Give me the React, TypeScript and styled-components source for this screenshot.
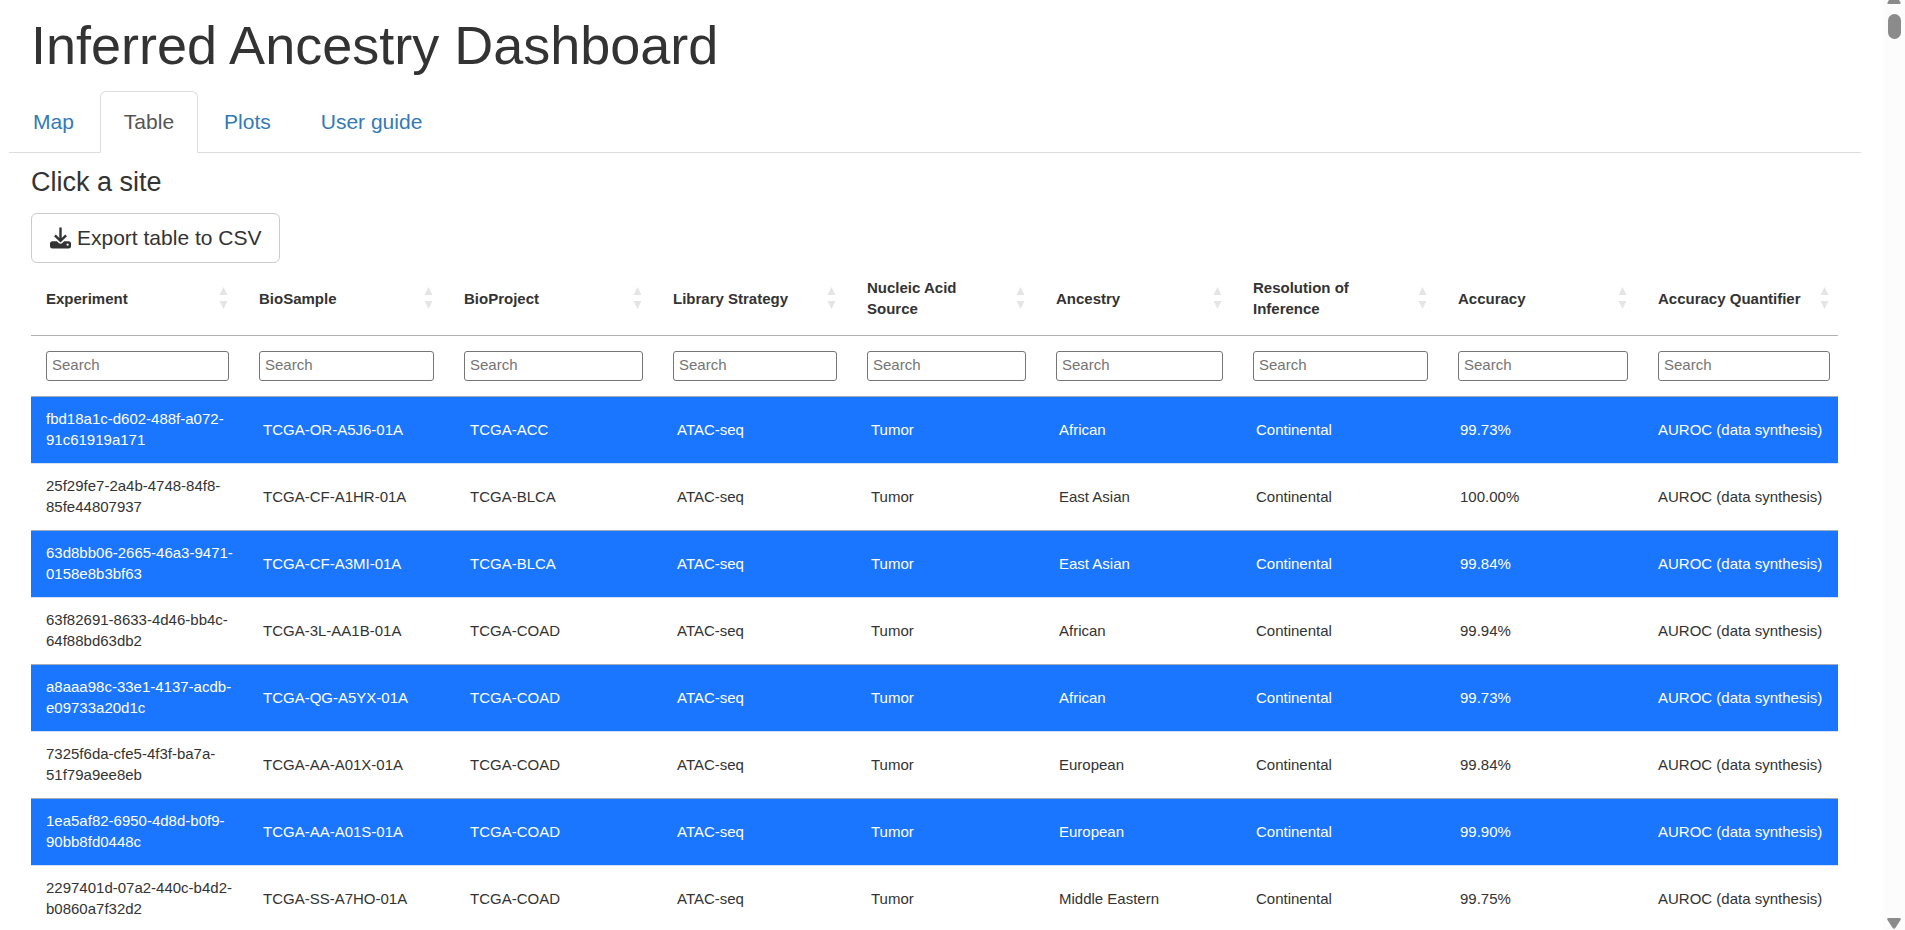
import React from 'react';
import styled, { createGlobalStyle } from 'styled-components';

const GlobalStyle = createGlobalStyle`
  *, *::before, *::after { box-sizing: border-box; }
  html, body { height: 100%; }
  body {
    margin: 0;
    overflow: hidden;
    background: #fff;
    color: #333;
    font-family: "Liberation Sans", Arial, Helvetica, sans-serif;
    font-size: 21px;
    line-height: 30px;
  }
  #root { height: 100%; }
`;

const Shell = styled.div`
  display: flex;
  height: 100%;
`;

const Page = styled.main`
  flex: 1;
  min-width: 0;
  overflow: hidden;
  padding: 0 22px 0 9px;
`;

const Inset = styled.div`
  padding: 0 23px 0 22px;
`;

const Title = styled.h1`
  margin: 0;
  padding: 15px 0 16px;
  font-size: 54px;
  font-weight: 400;
  line-height: 60px;
`;

const TabBar = styled.nav`
  display: flex;
  gap: 2px;
  border-bottom: 1px solid #ddd;
`;

const Tab = styled.a<{ $active?: boolean }>`
  margin-bottom: -1px;
  padding: 15px 23px;
  border: 1px solid ${(p) => (p.$active ? '#ddd' : 'transparent')};
  border-bottom-color: ${(p) => (p.$active ? '#fff' : 'transparent')};
  border-radius: 6px 6px 0 0;
  background: ${(p) => (p.$active ? '#fff' : 'transparent')};
  color: ${(p) => (p.$active ? '#555' : '#337ab7')};
  text-decoration: none;
`;

const Heading = styled.h4`
  margin: 14px 0 16px;
  font-size: 27px;
  font-weight: 400;
  line-height: 30px;
`;

const ExportButton = styled.button`
  display: flex;
  align-items: center;
  gap: 5px;
  padding: 9px 18px;
  border: 1px solid #ccc;
  border-radius: 6px;
  background: #fff;
  color: #333;
  font: inherit;
  cursor: pointer;
`;

const Table = styled.table`
  display: block;
  width: 100%;
  font-size: 15px;
  line-height: 21px;
`;

const Head = styled.thead`
  display: block;
`;

const Body = styled.tbody`
  display: block;
`;

const HeadRow = styled.tr`
  display: grid;
  grid-template-columns: 213fr 205fr 209fr 194fr 189fr 197fr 205fr 200fr 195fr;
`;

const HeadCell = styled.th`
  display: flex;
  align-items: center;
  justify-content: space-between;
  gap: 8px;
  height: 73px;
  padding: 0 15px 2px;
  border-bottom: 1px solid #b2b2b2;
  font-weight: 700;
  text-align: left;

  &:last-child { padding-right: 8px; }
`;

const SortButton = styled.button`
  flex: none;
  display: flex;
  padding: 0;
  border: 0;
  background: none;
  color: #e5e5e5;
  cursor: pointer;
`;

const FilterCell = styled.td`
  padding: 15px;

  &:last-child { padding-right: 8px; }
`;

const SearchInput = styled.input`
  display: block;
  width: 100%;
  height: 30px;
  padding: 0 5px 4px;
  border: 1px solid #767676;
  border-radius: 3px;
  background: #fff;
  color: #333;
  font: inherit;

  &::placeholder { color: #757575; }
`;

const Row = styled.tr<{ $selected: boolean }>`
  display: grid;
  grid-template-columns: 217fr 207fr 207fr 194fr 188fr 197fr 204fr 198fr 195fr;
  align-items: center;
  border-top: 1px solid ${(p) => (p.$selected ? '#a5acb8' : '#d3e1f5')};
  background: ${(p) => (p.$selected ? '#1a75ff' : '#fff')};
  color: ${(p) => (p.$selected ? '#fff' : '#333')};
`;

const Cell = styled.td`
  padding: 11px 15px 13px;
`;

const ScrollTrack = styled.div`
  display: flex;
  flex: none;
  flex-direction: column;
  align-items: center;
  width: 22px;
  padding-bottom: 1px;
  background: #fcfcfc;
  color: #8b8b8b;
`;

const ScrollThumb = styled.div`
  width: 13px;
  height: 25px;
  margin: 10px 0 auto;
  border-radius: 7px;
  background: #8b8b8b;
`;

const tabs = ['Map', 'Table', 'Plots', 'User guide'];

const columns = [
  'Experiment',
  'BioSample',
  'BioProject',
  'Library Strategy',
  'Nucleic Acid Source',
  'Ancestry',
  'Resolution of Inference',
  'Accuracy',
  'Accuracy Quantifier',
];

const records: [string, string, string, string, string][] = [
  ['fbd18a1c-d602-488f-a072-91c61919a171', 'TCGA-OR-A5J6-01A', 'TCGA-ACC', 'African', '99.73%'],
  ['25f29fe7-2a4b-4748-84f8-85fe44807937', 'TCGA-CF-A1HR-01A', 'TCGA-BLCA', 'East Asian', '100.00%'],
  ['63d8bb06-2665-46a3-9471-0158e8b3bf63', 'TCGA-CF-A3MI-01A', 'TCGA-BLCA', 'East Asian', '99.84%'],
  ['63f82691-8633-4d46-bb4c-64f88bd63db2', 'TCGA-3L-AA1B-01A', 'TCGA-COAD', 'African', '99.94%'],
  ['a8aaa98c-33e1-4137-acdb-e09733a20d1c', 'TCGA-QG-A5YX-01A', 'TCGA-COAD', 'African', '99.73%'],
  ['7325f6da-cfe5-4f3f-ba7a-51f79a9ee8eb', 'TCGA-AA-A01X-01A', 'TCGA-COAD', 'European', '99.84%'],
  ['1ea5af82-6950-4d8d-b0f9-90bb8fd0448c', 'TCGA-AA-A01S-01A', 'TCGA-COAD', 'European', '99.90%'],
  ['2297401d-07a2-440c-b4d2-b0860a7f32d2', 'TCGA-SS-A7HO-01A', 'TCGA-COAD', 'Middle Eastern', '99.75%'],
];

const DownloadIcon = () => (
  <svg width="22" height="22" viewBox="0 0 22 22" aria-hidden="true">
    <path d="M10.500.5V14M4.900 8.300l5.600 5.600 5.600-5.600" fill="none" stroke="currentColor" strokeWidth="2.400" />
    <path
      d="M2.500 14.200h4.300l1.900 1.700q1.800 1.500 3.600 0l1.900-1.700h4.300q2.500 0 2.500 2.500v2.300q0 2.500-2.500 2.500h-16Q0 21.500 0 19v-2.300q0-2.500 2.500-2.500z"
      fill="currentColor"
    />
    <circle cx="17.600" cy="17.700" r="1.100" fill="#fff" />
  </svg>
);

const SortIcon = () => (
  <svg width="11" height="22" viewBox="0 0 11 22" aria-hidden="true">
    <path d="M5.500 0 9.500 8h-8zM5.500 22 1.500 14h8z" fill="currentColor" />
  </svg>
);

export default function App() {
  return (
    <>
      <GlobalStyle />
      <Shell>
        <Page>
          <Inset>
            <Title>Inferred Ancestry Dashboard</Title>
          </Inset>
          <TabBar>
            {tabs.map((tab) => (
              <Tab key={tab} href="#" $active={tab === 'Table'}>
                {tab}
              </Tab>
            ))}
          </TabBar>
          <Inset>
            <Heading>Click a site</Heading>
            <ExportButton type="button">
              <DownloadIcon />
              Export table to CSV
            </ExportButton>
            <Table>
              <Head>
                <HeadRow>
                  {columns.map((name) => (
                    <HeadCell key={name} scope="col">
                      <span>{name}</span>
                      <SortButton type="button" aria-label={`Sort by ${name}`}>
                        <SortIcon />
                      </SortButton>
                    </HeadCell>
                  ))}
                </HeadRow>
                <HeadRow>
                  {columns.map((name) => (
                    <FilterCell key={name}>
                      <SearchInput type="text" placeholder="Search" aria-label={`Search ${name}`} />
                    </FilterCell>
                  ))}
                </HeadRow>
              </Head>
              <Body>
                {records.map(([experiment, sample, project, ancestry, accuracy], i) => (
                  <Row key={experiment} $selected={i % 2 === 0}>
                    <Cell>{experiment}</Cell>
                    <Cell>{sample}</Cell>
                    <Cell>{project}</Cell>
                    <Cell>ATAC-seq</Cell>
                    <Cell>Tumor</Cell>
                    <Cell>{ancestry}</Cell>
                    <Cell>Continental</Cell>
                    <Cell>{accuracy}</Cell>
                    <Cell>AUROC (data synthesis)</Cell>
                  </Row>
                ))}
              </Body>
            </Table>
          </Inset>
        </Page>
        <ScrollTrack aria-hidden="true">
          <svg width="14" height="4" viewBox="0 0 14 4">
            <path d="M2 0h10l1.500 2.500Q14 4 12.500 4h-11Q0 4 .5 2.500z" fill="currentColor" />
          </svg>
          <ScrollThumb />
          <svg width="14" height="11" viewBox="0 0 14 11">
            <path d="M1.500 0h11q2 0 1 2L8.300 10q-1.300 1.600-2.600 0L.5 2q-1-2 1-2z" fill="currentColor" />
          </svg>
        </ScrollTrack>
      </Shell>
    </>
  );
}
